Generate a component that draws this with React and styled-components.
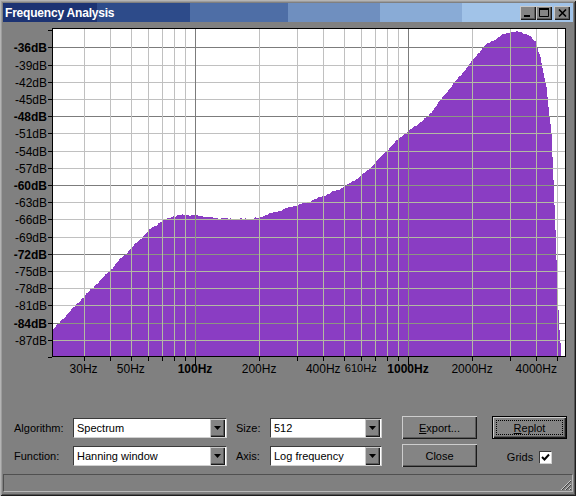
import React from 'react';
import styled, { createGlobalStyle, css } from 'styled-components';

const GlobalStyle = createGlobalStyle`
  html, body { margin: 0; padding: 0; background: #808080; }
  body { font-family: "Liberation Sans", Arial, sans-serif; }
`;

const Window = styled.div`
  box-sizing: border-box;
  width: 576px;
  height: 496px;
  background: #808080;
  padding: 3px;
  display: flex;
  flex-direction: column;
  box-shadow: inset 1px 1px 0 #b4b4b4, inset -1px -1px 0 #1e1e1e,
    inset 2px 2px 0 #9c9c9c, inset -2px -2px 0 #545454;
  font-family: "Liberation Sans", Arial, sans-serif;
  font-size: 11px;
  color: #000;
`;

const TitleBar = styled.div`
  height: 19px;
  flex: none;
  display: flex;
  align-items: center;
  padding: 0 3px 0 2px;
  background: linear-gradient(
    to right,
    #1c3373 0 94px,
    #2d4b8a 94px 187px,
    #4e6ea6 187px 285px,
    #6f8fbf 285px 377px,
    #89abd6 377px 459px,
    #a1c3e8 459px
  );
`;

const Title = styled.div`
  flex: 1;
  color: #fff;
  font-weight: bold;
  font-size: 12px;
  letter-spacing: -0.2px;
`;

const TitleButton = styled.div`
  box-sizing: border-box;
  width: 16px;
  height: 14px;
  margin-left: ${(p) => (p.$gap ? 2 : 0)}px;
  background: #848484;
  display: flex;
  align-items: center;
  justify-content: center;
  box-shadow: inset 1px 1px 0 #c8c8c8, inset -1px -1px 0 #1a1a1a,
    inset -2px -2px 0 #5a5a5a;
`;

const Chart = styled.svg`
  display: block;
  flex: none;
  width: 570px;
  height: 373px;
`;

const Controls = styled.div`
  margin-top: 21px;
  padding-left: 11px;
  display: grid;
  grid-template-columns: 59px 163px 34px 132px 90px 75px;
  grid-template-rows: 23px 23px;
  row-gap: 5px;
  align-items: center;
`;

const Label = styled.span`
  font-size: 11px;
  white-space: nowrap;
`;

const SelectBox = styled.div`
  box-sizing: border-box;
  width: ${(p) => p.$w}px;
  height: 20px;
  background: #fff;
  border: 1px solid;
  border-color: #3a3a3a #d0d0d0 #d0d0d0 #3a3a3a;
  display: flex;
  align-items: center;
  padding-left: 3px;
  font-size: 11px;
`;

const SelectText = styled.span`
  flex: 1;
  white-space: nowrap;
  overflow: hidden;
`;

const DropButton = styled.div`
  box-sizing: border-box;
  width: 15px;
  height: 18px;
  margin-right: 1px;
  background: #848484;
  display: flex;
  align-items: center;
  justify-content: center;
  box-shadow: inset 1px 1px 0 #c8c8c8, inset -1px -1px 0 #1a1a1a,
    inset -2px -2px 0 #5a5a5a;
`;

const Button = styled.div`
  box-sizing: border-box;
  width: 75px;
  height: 23px;
  background: #848484;
  display: flex;
  align-items: center;
  justify-content: center;
  font-size: 11px;
  position: relative;
  box-shadow: inset 1px 1px 0 #cdcdcd, inset -1px -1px 0 #1a1a1a,
    inset -2px -2px 0 #5a5a5a;
  ${(p) =>
    p.$default &&
    css`
      border: 1px solid #000;
    `}
`;

const FocusRing = styled.span`
  position: absolute;
  inset: 3px;
  border: 1px dotted #000;
  pointer-events: none;
`;

const U = styled.span`
  text-decoration: underline;
`;

const GridsCell = styled.div`
  display: flex;
  align-items: center;
  justify-content: center;
  gap: 6px;
  padding-top: 3px;
`;

const CheckBox = styled.div`
  box-sizing: border-box;
  width: 13px;
  height: 13px;
  background: #fff;
  border: 1px solid;
  border-color: #3a3a3a #d0d0d0 #d0d0d0 #3a3a3a;
  display: flex;
  align-items: center;
  justify-content: center;
`;

const StatusBar = styled.div`
  box-sizing: border-box;
  margin-top: 7px;
  height: 18px;
  flex: none;
  border: 1px solid;
  border-color: #505050 #b8b8b8 #b8b8b8 #505050;
  display: flex;
  align-items: flex-end;
  justify-content: flex-end;
`;

/* ---------- chart data ---------- */
const fx = (f) => 195 + 213 * Math.log10(f / 100);
const dy = (db) => Math.round(47.3 + ((-36 - db) / 3) * 17.2);

const CURVE = [
  [53, 329], [83, 297], [111, 269], [120, 259], [130, 249], [140, 239],
  [150, 229], [160, 222], [170, 217], [180, 215], [190, 215], [200, 216],
  [215, 218], [240, 219], [258, 218], [265, 215], [275, 212], [290, 207],
  [305, 203], [320, 197], [335, 191], [345, 186], [355, 180], [370, 168],
  [385, 152], [400, 137], [415, 126], [428, 116], [440, 100], [453, 84],
  [470, 63], [483, 47], [490, 42], [502, 35], [510, 32], [520, 32],
  [528, 35], [535, 42], [540, 57], [543, 73], [546, 87], [548, 107],
  [551, 133], [553, 180], [555, 230], [557, 290], [559, 330], [560, 343],
  [561, 356],
];

function curveY(x) {
  for (let i = 0; i < CURVE.length - 1; i++) {
    const [x0, y0] = CURVE[i];
    const [x1, y1] = CURVE[i + 1];
    if (x >= x0 && x <= x1) {
      const t = (x - x0) / (x1 - x0 || 1);
      return y0 + (y1 - y0) * t;
    }
  }
  return 356;
}

function buildFill() {
  let d = 'M53 356';
  for (let x = 53; x <= 560; x++) {
    let y = curveY(x);
    if (x < 545) y += Math.sin(x * 1.3) * 0.35 + Math.sin(x * 0.41) * 0.45;
    y = Math.min(356, Math.round(y));
    d += ` V${y} H${x + 1}`;
  }
  d += ' V356 Z';
  return d;
}
const FILL = buildFill();

const DB_LABELS = [];
for (let db = -36; db >= -87; db -= 3) DB_LABELS.push(db);
const MAJOR_DB = new Set([-36, -48, -60, -72, -84]);

const FREQS = [30, 40, 50, 60, 70, 80, 90, 100, 200, 300, 400, 500, 600, 700, 800, 900, 1000, 2000, 3000, 4000, 5000];
const MAJOR_F = new Set([100, 1000]);
const X_LABELS = [
  { t: '30Hz', f: 30 },
  { t: '50Hz', f: 50 },
  { t: '100Hz', f: 100, b: true },
  { t: '200Hz', f: 200 },
  { t: '400Hz', f: 400 },
  { t: '610Hz', f: 600, s: true },
  { t: '1000Hz', f: 1000, b: true },
  { t: '2000Hz', f: 2000 },
  { t: '4000Hz', f: 4000 },
];

const PL = 53, PR = 565, PT = 29, PB = 356;

function GridLines({ minor, major }) {
  return (
    <g shapeRendering="crispEdges">
      {DB_LABELS.map((db) => (
        <line
          key={'h' + db}
          x1={PL}
          x2={PR}
          y1={dy(db) + 0.5}
          y2={dy(db) + 0.5}
          stroke={MAJOR_DB.has(db) ? major : minor}
          strokeWidth="1"
        />
      ))}
      {FREQS.map((f) => {
        const x = Math.round(fx(f)) + 0.5;
        return (
          <line
            key={'v' + f}
            x1={x}
            x2={x}
            y1={PT}
            y2={PB}
            stroke={MAJOR_F.has(f) ? major : minor}
            strokeWidth="1"
          />
        );
      })}
    </g>
  );
}

function Spectrum() {
  return (
    <Chart viewBox="3 22 570 373">
      <defs>
        <clipPath id="fillClip">
          <path d={FILL} />
        </clipPath>
      </defs>
      <rect x={PL} y={PT} width={PR - PL} height={PB - PT} fill="#fff" />
      <path d={FILL} fill="#8a3dc3" shapeRendering="crispEdges" />
      <GridLines minor="#c0c0c0" major="#7c7c7c" />
      <g clipPath="url(#fillClip)">
        <GridLines minor="#b3baa2" major="#8d9582" />
      </g>
      <rect
        x={PL - 0.5}
        y={PT - 0.5}
        width={PR - PL + 1}
        height={PB - PT + 1}
        fill="none"
        stroke="#000"
        strokeWidth="1"
        shapeRendering="crispEdges"
      />
      <g shapeRendering="crispEdges" stroke="#000" strokeWidth="1">
        {[...DB_LABELS, -33, -90].map((db) => (
          <line key={'t' + db} x1={48} x2={52} y1={dy(db) + 0.5} y2={dy(db) + 0.5} />
        ))}
        {FREQS.map((f) => {
          const x = Math.round(fx(f)) + 0.5;
          return <line key={'xt' + f} x1={x} x2={x} y1={357} y2={MAJOR_F.has(f) ? 365 : 361} />;
        })}
      </g>
      <g fontFamily='"Liberation Sans", Arial, sans-serif' fontSize="12" fill="#000">
        {DB_LABELS.map((db) => (
          <text
            key={'l' + db}
            x={47}
            y={dy(db) + 5}
            textAnchor="end"
            fontWeight={MAJOR_DB.has(db) ? 'bold' : 'normal'}
          >
            {db}dB
          </text>
        ))}
        {X_LABELS.map((l) => (
          <text
            key={l.t}
            x={fx(l.f)}
            y={l.s ? 372 : 373}
            textAnchor="middle"
            fontWeight={l.b ? 'bold' : 'normal'}
            fontSize={l.s ? 11 : 12}
          >
            {l.t}
          </text>
        ))}
      </g>
    </Chart>
  );
}

const DownArrow = () => (
  <svg width="7" height="4" viewBox="0 0 7 4">
    <path d="M0 0H7L3.5 4Z" fill="#000" />
  </svg>
);

function Select({ w, value }) {
  return (
    <SelectBox $w={w}>
      <SelectText>{value}</SelectText>
      <DropButton>
        <DownArrow />
      </DropButton>
    </SelectBox>
  );
}

export default function App() {
  return (
    <>
      <GlobalStyle />
      <Window>
        <TitleBar>
          <Title>Frequency Analysis</Title>
          <TitleButton>
            <svg width="8" height="8" viewBox="0 0 8 8">
              <rect x="0" y="6" width="6" height="2" fill="#000" />
            </svg>
          </TitleButton>
          <TitleButton>
            <svg width="10" height="9" viewBox="0 0 10 9">
              <path d="M0.5 1.5H9.5V8.5H0.5Z" fill="none" stroke="#000" strokeWidth="1" />
              <rect x="0" y="0" width="10" height="2" fill="#000" />
            </svg>
          </TitleButton>
          <TitleButton $gap>
            <svg width="9" height="8" viewBox="0 0 9 8">
              <path d="M1 0.5L8 7.5M8 0.5L1 7.5" stroke="#000" strokeWidth="1.6" />
            </svg>
          </TitleButton>
        </TitleBar>

        <Spectrum />

        <Controls>
          <Label>Algorithm:</Label>
          <Select w={154} value="Spectrum" />
          <Label>Size:</Label>
          <Select w={112} value="512" />
          <Button>
            <span>
              <U>E</U>xport...
            </span>
          </Button>
          <Button $default>
            <FocusRing />
            <span>
              <U>R</U>eplot
            </span>
          </Button>

          <Label>Function:</Label>
          <Select w={154} value="Hanning window" />
          <Label>Axis:</Label>
          <Select w={112} value="Log frequency" />
          <Button>Close</Button>
          <GridsCell>
            <Label>Grids</Label>
            <CheckBox>
              <svg width="9" height="9" viewBox="0 0 9 9">
                <path d="M1 4L3.5 6.5L8 1.5" fill="none" stroke="#000" strokeWidth="2" />
              </svg>
            </CheckBox>
          </GridsCell>
        </Controls>

        <StatusBar>
          <svg width="12" height="12" viewBox="0 0 12 12">
            <g strokeWidth="1" shapeRendering="crispEdges">
              <path d="M11 1L1 11M11 5L5 11M11 9L9 11" stroke="#c8c8c8" />
              <path d="M11 2L2 11M11 6L6 11M11 10L10 11" stroke="#404040" />
            </g>
          </svg>
        </StatusBar>
      </Window>
    </>
  );
}
